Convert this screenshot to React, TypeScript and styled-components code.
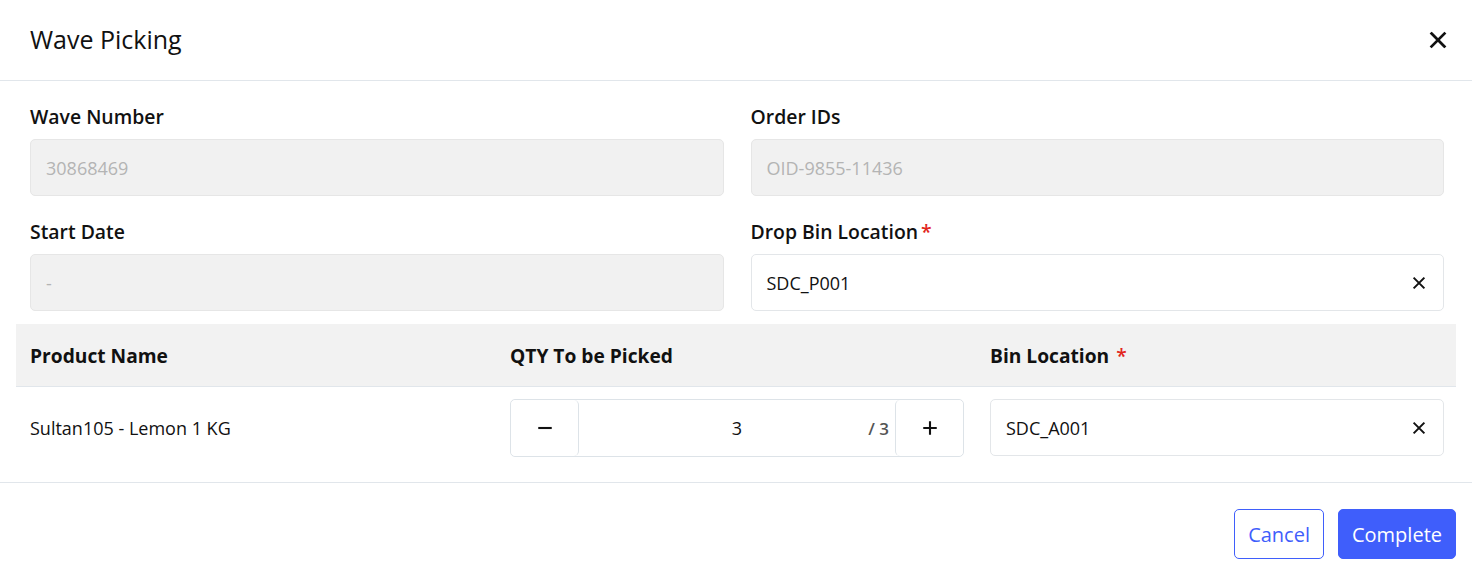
import React from "react";
import styled, { createGlobalStyle } from "styled-components";

const Global = createGlobalStyle`
  * { box-sizing: border-box; }
  html, body { margin: 0; padding: 0; background: #fff; }
  body { font-family: "Open Sans", "Noto Sans", sans-serif; color: #111; }
`;

const Modal = styled.div`
  width: 1472px;
  height: 576px;
  background: #fff;
  display: flex;
  flex-direction: column;
`;

const Header = styled.div`
  height: 81px;
  border-bottom: 1px solid #e1e6eb;
  display: flex;
  align-items: center;
  justify-content: space-between;
  padding: 0 20px 0 30px;
`;

const Title = styled.h2`
  margin: 0 0 2px;
  font-size: 25px;
  font-weight: 400;
  color: #111;
`;

const IconButton = styled.button`
  border: none;
  background: none;
  padding: 0;
  width: 28px;
  height: 28px;
  display: flex;
  align-items: center;
  justify-content: center;
  cursor: pointer;
`;

const Body = styled.div`
  padding: 0 16px;
`;

const FieldGrid = styled.div`
  display: grid;
  grid-template-columns: 1fr 1fr;
  column-gap: 27px;
  row-gap: 24px;
  padding: 24px 12px 13px 14px;
`;

const Field = styled.div`
  display: flex;
  flex-direction: column;
`;

const Label = styled.label`
  font-size: 19.4px;
  font-weight: 600;
  line-height: 22px;
  color: #111;
  margin: 1px 0 11px;
  display: flex;
  gap: 3px;
`;

const Req = styled.span<{ $gap?: number }>`
  color: #e2261c;
  font-weight: 600;
  margin-left: ${(p) => p.$gap ?? 0}px;
`;

const InputBox = styled.div<{ $disabled?: boolean }>`
  height: 57px;
  border: 1px solid ${(p) => (p.$disabled ? "#e6e6e6" : "#e3e6e9")};
  background: ${(p) => (p.$disabled ? "#f1f1f1" : "#fff")};
  border-radius: 5px;
  display: flex;
  align-items: center;
  justify-content: space-between;
  padding: 0 16px 0 15px;
  font-size: 18px;
  color: ${(p) => (p.$disabled ? "#b4b4b4" : "#111")};
`;

const Table = styled.div`
  display: flex;
  flex-direction: column;
`;

const HeadRow = styled.div`
  display: grid;
  grid-template-columns: repeat(3, 1fr);
  background: #f2f2f2;
  height: 63px;
  align-items: center;
  border-bottom: 1px solid #e1e6eb;
`;

const HeadCell = styled.div`
  padding: 0 12px 0 14px;
  font-size: 19.2px;
  font-weight: 700;
  color: #111;
`;

const Row = styled.div`
  display: grid;
  grid-template-columns: repeat(3, 1fr);
  align-items: start;
  height: 96px;
  border-bottom: 1px solid #e1e6eb;
  margin: 0 -16px;
  padding: 12px 16px 0;
`;

const Cell = styled.div<{ $text?: boolean }>`
  padding: 0 12px 0 14px;
  font-size: 18px;
  color: #111;
  ${(p) => (p.$text ? "height: 57px; display: flex; align-items: center;" : "")}
`;

const Stepper = styled.div`
  height: 58px;
  border: 1px solid #dde3e8;
  border-radius: 5px;
  display: flex;
`;

const StepBtn = styled.button<{ $side: "left" | "right" }>`
  width: 68px;
  border: none;
  background: #fff;
  ${(p) => (p.$side === "left" ? "border-right" : "border-left")}: 1px solid #dde3e8;
  border-radius: 5px;
  display: flex;
  align-items: center;
  justify-content: center;
  padding: 0;
`;

const QtyValue = styled.div`
  flex: 1;
  position: relative;
  display: flex;
  align-items: center;
  justify-content: center;
  font-size: 18px;
  color: #111;
`;

const QtyMax = styled.span`
  position: absolute;
  right: 6px;
  font-size: 17px;
  font-weight: 600;
  color: #555;
`;

const Footer = styled.div`
  display: flex;
  justify-content: flex-end;
  gap: 14px;
  padding: 26px 0 0 0;
`;

const Button = styled.button<{ $primary?: boolean }>`
  height: 50px;
  padding: 0 13px;
  border-radius: 5px;
  border: 1px solid #3f5efb;
  background: ${(p) => (p.$primary ? "#3f5efb" : "#fff")};
  color: ${(p) => (p.$primary ? "#fff" : "#3f5efb")};
  font-family: inherit;
  font-size: 20px;
  font-weight: 400;
  cursor: pointer;
`;

const XIcon = ({ size, stroke }: { size: number; stroke: number }) => (
  <svg width={size} height={size} viewBox="0 0 24 24" fill="none" stroke="#111" strokeWidth={stroke} strokeLinecap="square">
    <path d="M5 5L19 19M19 5L5 19" />
  </svg>
);

const Minus = () => (
  <svg width="18" height="18" viewBox="0 0 24 24" fill="none" stroke="#111" strokeWidth="2.8">
    <path d="M3 12H21" />
  </svg>
);

const Plus = () => (
  <svg width="18" height="18" viewBox="0 0 24 24" fill="none" stroke="#111" strokeWidth="2.8">
    <path d="M3 12H21M12 3V21" />
  </svg>
);

export default function App() {
  return (
    <>
      <Global />
      <Modal>
        <Header>
          <Title>Wave Picking</Title>
          <IconButton aria-label="close">
            <XIcon size={22} stroke={3} />
          </IconButton>
        </Header>
        <Body>
          <FieldGrid>
            <Field>
              <Label>Wave Number</Label>
              <InputBox $disabled>30868469</InputBox>
            </Field>
            <Field>
              <Label>Order IDs</Label>
              <InputBox $disabled>OID-9855-11436</InputBox>
            </Field>
            <Field>
              <Label>Start Date</Label>
              <InputBox $disabled>-</InputBox>
            </Field>
            <Field>
              <Label>
                Drop Bin Location<Req>*</Req>
              </Label>
              <InputBox>
                SDC_P001
                <XIcon size={16} stroke={3} />
              </InputBox>
            </Field>
          </FieldGrid>
          <Table>
            <HeadRow>
              <HeadCell>Product Name</HeadCell>
              <HeadCell>QTY To be Picked</HeadCell>
              <HeadCell>
                Bin Location <Req $gap={2}>*</Req>
              </HeadCell>
            </HeadRow>
            <Row>
              <Cell $text>Sultan105 - Lemon 1 KG</Cell>
              <Cell>
                <Stepper>
                  <StepBtn $side="left"><Minus /></StepBtn>
                  <QtyValue>
                    3
                    <QtyMax>/ 3</QtyMax>
                  </QtyValue>
                  <StepBtn $side="right"><Plus /></StepBtn>
                </Stepper>
              </Cell>
              <Cell>
                <InputBox>
                  SDC_A001
                  <XIcon size={16} stroke={3} />
                </InputBox>
              </Cell>
            </Row>
          </Table>
          <Footer>
            <Button>Cancel</Button>
            <Button $primary>Complete</Button>
          </Footer>
        </Body>
      </Modal>
    </>
  );
}
